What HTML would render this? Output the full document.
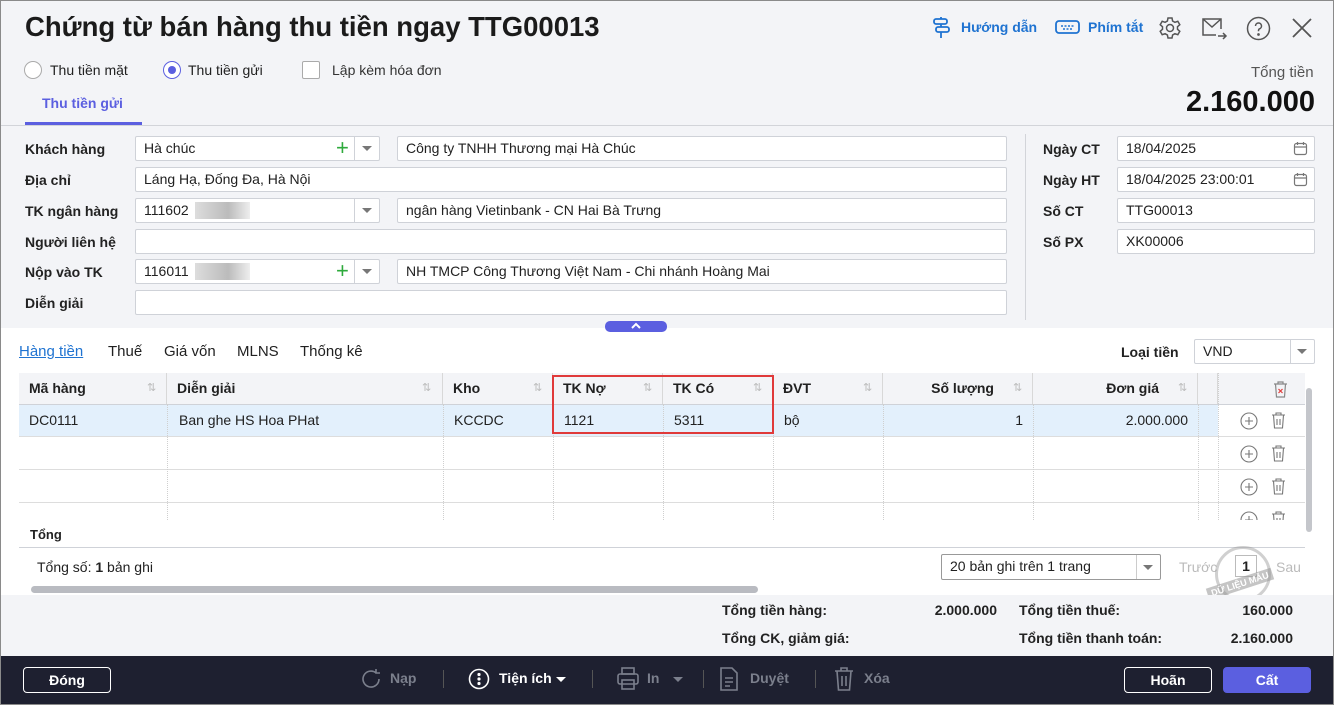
<!DOCTYPE html>
<html><head><meta charset="utf-8"><style>
*{box-sizing:border-box;margin:0;padding:0}
body{width:1334px;height:705px;overflow:hidden;background:#f3f4f7;font-family:"Liberation Sans",sans-serif;font-size:14px;color:#212121;position:relative}
.a{position:absolute}
.lbl{position:absolute;font-weight:bold;font-size:14px;color:#222}
.in{position:absolute;height:25px;background:#fff;border:1px solid #cfd2d8;border-radius:2px;padding:0 8px;line-height:23px;font-size:14px;white-space:nowrap;overflow:hidden}
.th{position:absolute;top:373px;height:31px;line-height:31px;font-weight:bold;padding-left:10px;border-right:1px solid #d8d8d8}
.td{position:absolute;height:32px;line-height:32px;padding:0 10px}
.vl{position:absolute;width:0;border-left:1px dotted #cfcfcf}
.hl{position:absolute;height:1px;background:#cfd2d8}
.sort{position:absolute;color:#bbb;font-size:11px;font-weight:normal}
.dd{position:absolute;width:0;height:0;border-left:5px solid transparent;border-right:5px solid transparent;border-top:5px solid #777}
.btn{position:absolute;border:1px solid #fff;border-radius:4px;color:#fff;font-weight:bold;text-align:center;height:26px;line-height:24px}
.ft{position:absolute;top:670px;color:#7b7f8c;font-weight:bold;font-size:14px}
</style></head><body>
<div class="a" style="left:0;top:0;width:1334px;height:705px;border:1px solid #8a8a8a;pointer-events:none;z-index:9"></div>

<div class="a" style="left:25px;top:11px;font-size:27.5px;font-weight:bold;color:#1b1b1b">Chứng từ bán hàng thu tiền ngay TTG00013</div>

<svg class="a" style="left:932px;top:17px" width="20" height="22" viewBox="0 0 20 22" fill="none" stroke="#1f73d1" stroke-width="1.8"><rect x="2" y="2" width="13" height="5" rx="2"/><rect x="4" y="10" width="13" height="5" rx="2"/><path d="M9 15v6M9 0v2M9 7v3"/></svg>
<div class="a" style="left:961px;top:19px;color:#1f73d1;font-weight:bold">Hướng dẫn</div>
<svg class="a" style="left:1055px;top:20px" width="25" height="14" viewBox="0 0 25 14" fill="none" stroke="#1f73d1" stroke-width="1.8"><rect x="1" y="1" width="23" height="12" rx="3"/><path d="M6 6h13M8 9h9" stroke-width="1.4" stroke-dasharray="2 1.5"/></svg>
<div class="a" style="left:1088px;top:19px;color:#1f73d1;font-weight:bold">Phím tắt</div>
<svg class="a" style="left:1158px;top:16px" width="24" height="24" viewBox="0 0 24 24" fill="none" stroke="#555" stroke-width="1.5"><circle cx="12" cy="12" r="3.5"/><path d="M10 2h4l.6 3 2.3 1.3 2.9-1 2 3.4-2.3 2v2.6l2.3 2-2 3.4-2.9-1-2.3 1.3-.6 3h-4l-.6-3-2.3-1.3-2.9 1-2-3.4 2.3-2v-2.6l-2.3-2 2-3.4 2.9 1L9.4 5z"/></svg>
<svg class="a" style="left:1201px;top:17px" width="27" height="24" viewBox="0 0 27 24" fill="none" stroke="#555" stroke-width="1.5"><path d="M20 12V2H2v16h13"/><path d="M2 2l9 8 9-8"/><path d="M17 19h8M22 16l3 3-3 3"/></svg>
<svg class="a" style="left:1246px;top:16px" width="25" height="25" viewBox="0 0 25 25" fill="none" stroke="#555" stroke-width="1.5"><circle cx="12.5" cy="12.5" r="11"/><path d="M9.5 10a3 3 0 1 1 4 2.8c-.8.4-1 1-1 2v.5"/><circle cx="12.5" cy="18.5" r=".6" fill="#555"/></svg>
<svg class="a" style="left:1291px;top:17px" width="22" height="22" viewBox="0 0 22 22" stroke="#555" stroke-width="1.8"><path d="M2 2l18 18M20 2L2 20"/></svg>

<div class="a" style="left:24px;top:61px;width:18px;height:18px;border:1px solid #aaa;border-radius:50%;background:#fff"></div>
<div class="a" style="left:50px;top:62px">Thu tiền mặt</div>
<div class="a" style="left:163px;top:61px;width:18px;height:18px;border:1px solid #5b5fe0;border-radius:50%;background:#fff"></div>
<div class="a" style="left:168px;top:66px;width:8px;height:8px;border-radius:50%;background:#5b5fe0"></div>
<div class="a" style="left:188px;top:62px">Thu tiền gửi</div>
<div class="a" style="left:302px;top:61px;width:18px;height:18px;border:1px solid #aaa;border-radius:2px;background:#fff"></div>
<div class="a" style="left:332px;top:62px;color:#333">Lập kèm hóa đơn</div>
<div class="a" style="left:42px;top:95px;color:#5b5fe0;font-weight:bold">Thu tiền gửi</div>
<div class="a" style="left:25px;top:122px;width:117px;height:3px;background:#5b5fe0"></div>
<div class="a" style="left:1251px;top:64px;color:#555;font-size:15px">Tổng tiền</div>
<div class="a" style="right:19px;top:86px;font-size:29px;font-weight:bold;color:#111">2.160.000</div>
<div class="hl" style="left:0;top:125px;width:1334px;background:#d2d4d9"></div>

<div class="lbl" style="left:25px;top:141px">Khách hàng</div>
<div class="lbl" style="left:25px;top:172px">Địa chỉ</div>
<div class="lbl" style="left:25px;top:203px">TK ngân hàng</div>
<div class="lbl" style="left:25px;top:234px">Người liên hệ</div>
<div class="lbl" style="left:25px;top:264px">Nộp vào TK</div>
<div class="lbl" style="left:25px;top:295px">Diễn giải</div>

<div class="in" style="left:135px;top:136px;width:245px">Hà chúc</div>
<div class="a" style="left:354px;top:137px;width:1px;height:23px;background:#cfd2d8"></div>
<div class="a" style="left:336px;top:137px;color:#2eaa3c;font-size:22px;line-height:22px">+</div>
<div class="dd" style="left:362px;top:146px"></div>
<div class="in" style="left:397px;top:136px;width:610px">Công ty TNHH Thương mại Hà Chúc</div>
<div class="in" style="left:135px;top:167px;width:872px">Láng Hạ, Đống Đa, Hà Nội</div>
<div class="in" style="left:135px;top:198px;width:245px">111602</div>
<div class="a" style="left:195px;top:202px;width:55px;height:17px;background:linear-gradient(90deg,#ddd,#bbb 60%,#eee)"></div>
<div class="a" style="left:354px;top:199px;width:1px;height:23px;background:#cfd2d8"></div>
<div class="dd" style="left:362px;top:208px"></div>
<div class="in" style="left:397px;top:198px;width:610px">ngân hàng Vietinbank - CN Hai Bà Trưng</div>
<div class="in" style="left:135px;top:229px;width:872px"></div>
<div class="in" style="left:135px;top:259px;width:245px">116011</div>
<div class="a" style="left:195px;top:263px;width:55px;height:17px;background:linear-gradient(90deg,#ddd,#bbb 60%,#eee)"></div>
<div class="a" style="left:354px;top:260px;width:1px;height:23px;background:#cfd2d8"></div>
<div class="a" style="left:336px;top:260px;color:#2eaa3c;font-size:22px;line-height:22px">+</div>
<div class="dd" style="left:362px;top:269px"></div>
<div class="in" style="left:397px;top:259px;width:610px">NH TMCP Công Thương Việt Nam - Chi nhánh Hoàng Mai</div>
<div class="in" style="left:135px;top:290px;width:872px"></div>

<div class="a" style="left:1025px;top:134px;width:1px;height:186px;background:#d2d4d9"></div>
<div class="lbl" style="left:1043px;top:141px">Ngày CT</div>
<div class="lbl" style="left:1043px;top:172px">Ngày HT</div>
<div class="lbl" style="left:1043px;top:203px">Số CT</div>
<div class="lbl" style="left:1043px;top:234px">Số PX</div>
<div class="in" style="left:1117px;top:136px;width:198px">18/04/2025</div>
<div class="in" style="left:1117px;top:167px;width:198px">18/04/2025 23:00:01</div>
<div class="in" style="left:1117px;top:198px;width:198px">TTG00013</div>
<div class="in" style="left:1117px;top:229px;width:198px">XK00006</div>
<svg class="a" style="left:1293px;top:141px" width="15" height="15" viewBox="0 0 15 15" fill="none" stroke="#777" stroke-width="1.2"><rect x="1.5" y="2.5" width="12" height="11" rx="2"/><path d="M4.5 1v3M10.5 1v3M1.5 6h12"/></svg>
<svg class="a" style="left:1293px;top:172px" width="15" height="15" viewBox="0 0 15 15" fill="none" stroke="#777" stroke-width="1.2"><rect x="1.5" y="2.5" width="12" height="11" rx="2"/><path d="M4.5 1v3M10.5 1v3M1.5 6h12"/></svg>

<div class="a" style="left:0;top:328px;width:1334px;height:267px;background:#fff"></div>
<div class="a" style="left:605px;top:321px;width:62px;height:11px;border-radius:5px;background:#5b5fe0"></div>
<svg class="a" style="left:630px;top:322px" width="12" height="8" viewBox="0 0 12 8" fill="none" stroke="#fff" stroke-width="2"><path d="M2 6l4-4 4 4"/></svg>

<div class="a" style="left:19px;top:343px;color:#1f73d1;text-decoration:underline;font-size:15px">Hàng tiền</div>
<div class="a" style="left:108px;top:343px;font-size:15px">Thuế</div>
<div class="a" style="left:164px;top:343px;font-size:15px">Giá vốn</div>
<div class="a" style="left:237px;top:343px;font-size:15px">MLNS</div>
<div class="a" style="left:300px;top:343px;font-size:15px">Thống kê</div>
<div class="lbl" style="left:1121px;top:344px">Loại tiền</div>
<div class="in" style="left:1194px;top:339px;width:121px">VND</div>
<div class="a" style="left:1290px;top:340px;width:1px;height:23px;background:#cfd2d8"></div>
<div class="dd" style="left:1297px;top:349px"></div>

<div class="a" style="left:19px;top:373px;width:1286px;height:31px;background:#f3f4f7"></div>
<div class="th" style="left:19px;width:148px">Mã hàng<span class="sort" style="left:128px">⇅</span></div>
<div class="th" style="left:167px;width:276px">Diễn giải<span class="sort" style="left:255px">⇅</span></div>
<div class="th" style="left:443px;width:110px">Kho<span class="sort" style="left:90px">⇅</span></div>
<div class="th" style="left:553px;width:110px">TK Nợ<span class="sort" style="left:90px">⇅</span></div>
<div class="th" style="left:663px;width:110px">TK Có<span class="sort" style="left:90px">⇅</span></div>
<div class="th" style="left:773px;width:110px">ĐVT<span class="sort" style="left:90px">⇅</span></div>
<div class="th" style="left:883px;width:150px;text-align:right;padding-right:38px">Số lượng<span class="sort" style="left:130px">⇅</span></div>
<div class="th" style="left:1033px;width:165px;text-align:right;padding-right:38px">Đơn giá<span class="sort" style="left:145px">⇅</span></div>
<div class="th" style="left:1198px;width:20px"></div>
<svg class="a" style="left:1273px;top:381px" width="15" height="17" viewBox="0 0 15 17" fill="none" stroke="#888" stroke-width="1.2"><path d="M1 3h13M5 3V1h5v2M2.5 3l1 13h8l1-13"/><path d="M5.5 8l4 4M9.5 8l-4 4" stroke="#e03a3a"/></svg>
<div class="hl" style="left:19px;top:404px;width:1286px"></div>

<div class="a" style="left:19px;top:405px;width:1199px;height:31px;background:#e3f0fc"></div>
<div class="td" style="left:19px;top:404px">DC0111</div>
<div class="td" style="left:169px;top:404px">Ban ghe HS Hoa PHat</div>
<div class="td" style="left:444px;top:404px">KCCDC</div>
<div class="td" style="left:554px;top:404px">1121</div>
<div class="td" style="left:664px;top:404px">5311</div>
<div class="td" style="left:774px;top:404px">bộ</div>
<div class="td" style="left:883px;top:404px;width:150px;text-align:right">1</div>
<div class="td" style="left:1033px;top:404px;width:165px;text-align:right">2.000.000</div>
<div class="hl" style="left:19px;top:436px;width:1286px;background:#ddd"></div>
<div class="hl" style="left:19px;top:469px;width:1286px;background:#ddd"></div>
<div class="hl" style="left:19px;top:502px;width:1286px;background:#ddd"></div>
<div class="vl" style="left:167px;top:404px;height:116px"></div>
<div class="vl" style="left:443px;top:404px;height:116px"></div>
<div class="vl" style="left:553px;top:404px;height:116px"></div>
<div class="vl" style="left:663px;top:404px;height:116px"></div>
<div class="vl" style="left:773px;top:404px;height:116px"></div>
<div class="vl" style="left:883px;top:404px;height:116px"></div>
<div class="vl" style="left:1033px;top:404px;height:116px"></div>
<div class="vl" style="left:1198px;top:404px;height:116px"></div>
<div class="vl" style="left:1218px;top:373px;height:147px"></div>
<div class="a" style="left:552px;top:375px;width:222px;height:59px;border:2px solid #e03a3a"></div>

<svg class="a" style="left:1239px;top:411px" width="50" height="112" viewBox="0 0 50 112" fill="none" stroke="#777" stroke-width="1.1">
<g id="r"><circle cx="10" cy="10" r="8"/><path d="M10 6v8M6 10h8"/><path d="M33 4h13M37 4V2h5v2M34.5 4l1 13h8l1-13M38 8v6M41 8v6"/></g>
<use href="#r" y="33"/><use href="#r" y="66"/><use href="#r" y="99"/>
</svg>
<div class="a" style="left:1230px;top:520px;width:75px;height:10px;background:#fff"></div>
<div class="a" style="left:1306px;top:388px;width:6px;height:144px;border-radius:3px;background:#c4c6cb"></div>

<div class="lbl" style="left:30px;top:527px;font-size:13px">Tổng</div>
<div class="hl" style="left:19px;top:547px;width:1286px"></div>
<div class="a" style="left:37px;top:559px">Tổng số: <b>1</b> bản ghi</div>
<div class="in" style="left:941px;top:554px;width:220px;height:26px;border-color:#999">20 bản ghi trên 1 trang</div>
<div class="a" style="left:1136px;top:555px;width:1px;height:24px;background:#ccc"></div>
<div class="dd" style="left:1143px;top:565px"></div>
<div class="a" style="left:1179px;top:559px;color:#bbb">Trước</div>
<div class="a" style="left:1235px;top:555px;width:22px;height:22px;border:1px solid #bbb;text-align:center;line-height:20px;font-weight:bold">1</div>
<div class="a" style="left:1276px;top:559px;color:#bbb">Sau</div>
<div class="a" style="left:1215px;top:546px;width:56px;height:56px;border:3px solid rgba(150,150,150,.45);border-radius:50%"></div>
<div class="a" style="left:1206px;top:578px;background:rgba(150,150,150,.55);color:#fff;font-size:9px;font-weight:bold;padding:1px 4px;transform:rotate(-18deg)">DỮ LIỆU MẪU</div>
<div class="a" style="left:31px;top:586px;width:727px;height:7px;border-radius:4px;background:#b9bbc1"></div>

<div class="a" style="left:19px;top:595px;width:1296px;height:60px;background:#f3f4f7"></div>
<div class="lbl" style="left:722px;top:602px">Tổng tiền hàng:</div>
<div class="lbl" style="left:722px;top:630px">Tổng CK, giảm giá:</div>
<div class="lbl" style="left:897px;top:602px;width:100px;text-align:right">2.000.000</div>
<div class="lbl" style="left:1019px;top:602px">Tổng tiền thuế:</div>
<div class="lbl" style="left:1019px;top:630px">Tổng tiền thanh toán:</div>
<div class="lbl" style="left:1193px;top:602px;width:100px;text-align:right">160.000</div>
<div class="lbl" style="left:1193px;top:630px;width:100px;text-align:right">2.160.000</div>

<div class="a" style="left:0;top:656px;width:1334px;height:49px;background:#1e2030"></div>
<div class="btn" style="left:23px;top:667px;width:88px">Đóng</div>
<svg class="a" style="left:360px;top:668px" width="22" height="22" viewBox="0 0 22 22" fill="none" stroke="#7b7f8c" stroke-width="1.6"><path d="M19 11a8 8 0 1 1-3-6.2M16 1v4h4"/></svg>
<div class="ft" style="left:390px">Nạp</div>
<div class="a" style="left:443px;top:670px;width:1px;height:18px;background:#555"></div>
<svg class="a" style="left:468px;top:668px" width="22" height="22" viewBox="0 0 22 22" fill="none" stroke="#fff" stroke-width="1.6"><circle cx="11" cy="11" r="9.5"/><circle cx="11" cy="6.5" r=".8" fill="#fff"/><circle cx="11" cy="11" r=".8" fill="#fff"/><circle cx="11" cy="15.5" r=".8" fill="#fff"/></svg>
<div class="ft" style="left:499px;color:#fff">Tiện ích</div>
<div class="dd" style="left:556px;top:677px;border-top-color:#fff"></div>
<div class="a" style="left:592px;top:670px;width:1px;height:18px;background:#555"></div>
<svg class="a" style="left:617px;top:667px" width="22" height="24" viewBox="0 0 22 24" fill="none" stroke="#7b7f8c" stroke-width="1.6"><rect x="5" y="1" width="12" height="6"/><rect x="1" y="7" width="20" height="10" rx="2"/><rect x="5" y="13" width="12" height="9"/></svg>
<div class="ft" style="left:647px">In</div>
<div class="dd" style="left:673px;top:677px;border-top-color:#7b7f8c"></div>
<div class="a" style="left:703px;top:670px;width:1px;height:18px;background:#555"></div>
<svg class="a" style="left:720px;top:667px" width="18" height="24" viewBox="0 0 18 24" fill="none" stroke="#7b7f8c" stroke-width="1.6"><path d="M1 1h11l5 5v17H1z"/><path d="M5 11h8M5 15h8M5 19h5"/></svg>
<div class="ft" style="left:750px">Duyệt</div>
<div class="a" style="left:815px;top:670px;width:1px;height:18px;background:#555"></div>
<svg class="a" style="left:834px;top:667px" width="20" height="24" viewBox="0 0 20 24" fill="none" stroke="#7b7f8c" stroke-width="1.6"><path d="M1 4h18M7 4V1h6v3M3 4l1.5 19h11L17 4M8 9v10M12 9v10"/></svg>
<div class="ft" style="left:864px">Xóa</div>
<div class="btn" style="left:1124px;top:667px;width:88px">Hoãn</div>
<div class="btn" style="left:1223px;top:667px;width:88px;background:#5b5fe0;border-color:#5b5fe0">Cất</div>
</body></html>
